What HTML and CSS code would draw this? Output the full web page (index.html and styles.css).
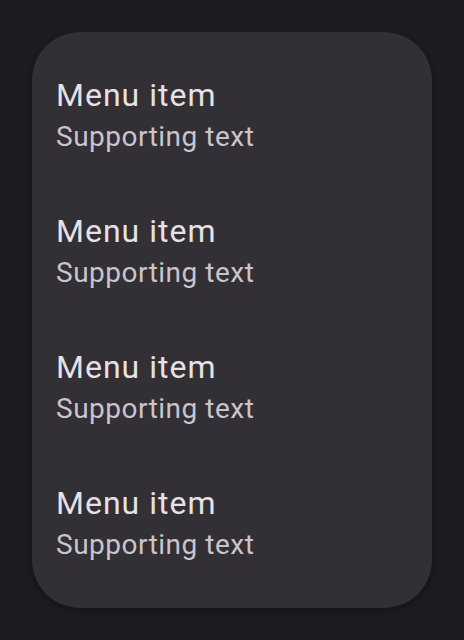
FILE: index.html
```html
<!DOCTYPE html>
<html>
<head>
<meta charset="utf-8">
<link rel="stylesheet" href="styles.css">
</head>
<body>
<div class="menu">
  <div class="item"><div class="label">Menu item</div><div class="support">Supporting text</div></div>
  <div class="item"><div class="label">Menu item</div><div class="support">Supporting text</div></div>
  <div class="item"><div class="label">Menu item</div><div class="support">Supporting text</div></div>
  <div class="item"><div class="label">Menu item</div><div class="support">Supporting text</div></div>
</div>
</body>
</html>
```
FILE: styles.css
```css
html, body { margin: 0; padding: 0; }
body {
  background: #1d1b20;
  width: 464px;
  height: 640px;
  padding: 32px;
  box-sizing: border-box;
  font-family: Roboto, "Liberation Sans", sans-serif;
}
.menu {
  width: 400px;
  height: 576px;
  box-sizing: border-box;
  background: #322f35;
  border-radius: 48px;
  padding: 16px 0;
  display: flex;
  flex-direction: column;
  box-shadow: 0 2px 6px rgba(0,0,0,0.3);
}
.item {
  height: 136px;
  box-sizing: border-box;
  padding: 23px 24px 0;
  display: flex;
  flex-direction: column;
}
.label {
  color: #e6e1e5;
  font-size: 32px;
  line-height: 48px;
  letter-spacing: 1px;
}
.support {
  color: #c9c5ca;
  font-size: 28px;
  line-height: 40px;
  letter-spacing: 0.5px;
  margin-top: -2px;
}
```
